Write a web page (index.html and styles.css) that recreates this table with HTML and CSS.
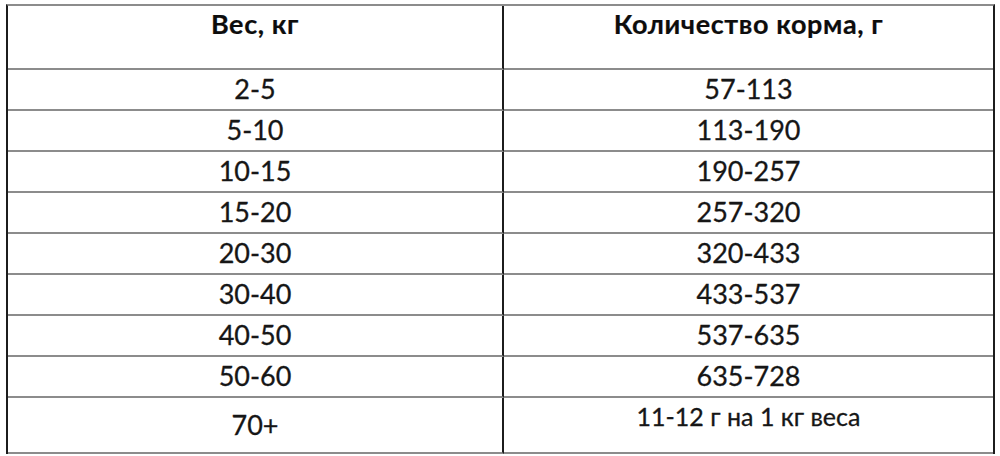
FILE: index.html
```html
<!DOCTYPE html>
<html lang="ru">
<head>
<meta charset="utf-8">
<title>Вес и количество корма</title>
<link rel="stylesheet" href="styles.css">
</head>
<body>
<div class="table">
  <div class="cell head left">Вес, кг</div>
  <div class="cell head">Количество корма, г</div>

  <div class="cell left">2-5</div><div class="cell">57-113</div>
  <div class="cell left">5-10</div><div class="cell">113-190</div>
  <div class="cell left">10-15</div><div class="cell">190-257</div>
  <div class="cell left">15-20</div><div class="cell">257-320</div>
  <div class="cell left">20-30</div><div class="cell">320-433</div>
  <div class="cell left">30-40</div><div class="cell">433-537</div>
  <div class="cell left">40-50</div><div class="cell">537-635</div>
  <div class="cell left">50-60</div><div class="cell">635-728</div>

  <div class="cell last left">70+</div>
  <div class="cell last note">11-12 г на 1 кг веса</div>
</div>
</body>
</html>
```
FILE: styles.css
```css
* { box-sizing: border-box; }
html, body { margin: 0; padding: 0; background: #fff; }
body { font-family: Lato, "Open Sans", sans-serif; color: #161616; }

.table {
  margin: 4px 0 0 6px;
  width: 989px;
  display: grid;
  grid-template-columns: 496px 489px;
  grid-template-rows: 64px repeat(8, 41px) 56px;
  border-top: 2px solid #8c8c8c;
  border-left: 2px solid #1c1c1c;
  border-right: 2px solid #1c1c1c;
}

.cell {
  display: flex;
  justify-content: center;
  align-items: center;
  border-bottom: 2px solid #8c8c8c;
  font-size: 27px;
  line-height: 1.2;
  -webkit-text-stroke: 0.3px #161616;
}

.left { border-right: 2px solid #1c1c1c; }

.head {
  align-items: flex-start;
  padding-top: 2px;
  font-weight: 700;
  font-size: 27px;
  letter-spacing: 0.6px;
  color: #0d0d0d;
  -webkit-text-stroke: 0.2px #0d0d0d;
}

.last.note {
  align-items: flex-start;
  padding-top: 3px;
  font-size: 25px;
}
```
